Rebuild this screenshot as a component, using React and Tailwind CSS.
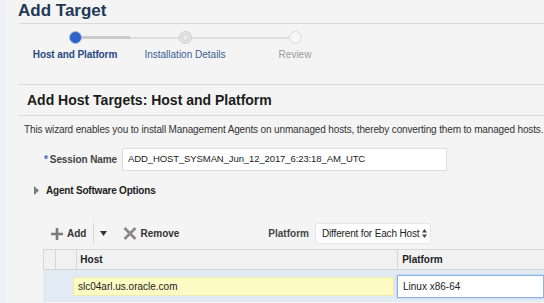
const Step = ({ label, state, left, right }) => {
	return (
		<div className="flex flex-col items-center pt-[7px]">
			<div className="flex items-center w-full h-[13px]">
				<div className="flex-1 flex items-center">
					{left && <div className={left === "thick" ? "w-full h-[3px] bg-[#cbcbcb]" : "w-full h-[2px] bg-[#dedede]"}></div>}
				</div>
				{state === "active" && <div className="w-[13px] h-[13px] rounded-full bg-[#2e63c8] border border-[#a9bde3]"></div>}
				{state === "next" && (
					<div className="w-[13px] h-[13px] rounded-full bg-[#e4e4e4] border border-[#cdcdcd] flex items-center justify-center">
						<div className="w-[7px] h-[7px] rounded-full border border-[#d2d2d2] bg-[#ececec]"></div>
					</div>
				)}
				{state === "todo" && <div className="w-[13px] h-[13px] rounded-full bg-[#f6f6f6] border border-[#dadada]"></div>}
				<div className="flex-1 flex items-center">
					{right && <div className={right === "thick" ? "w-full h-[3px] bg-[#cbcbcb]" : "w-full h-[2px] bg-[#dedede]"}></div>}
				</div>
			</div>
			<div
				className={
					"mt-[5px] leading-[12px] text-[10px] whitespace-nowrap " +
					(state === "active" ? "font-bold text-[#274a85] tracking-[-0.1px]" : state === "next" ? "text-[#3b5d96]" : "text-[#9b9b9b]")
				}
			>
				{label}
			</div>
		</div>
	)
}

const App = () => {
	return (
		<div className="w-[544px] h-[303px] overflow-hidden flex bg-[#f4f4f4] font-['Liberation_Sans',Arial,sans-serif] text-[#333]">
			<div className="w-[5px] shrink-0 bg-[#edf1f7]"></div>
			<div className="flex-1 min-w-0 flex flex-col ml-[14px]">
				<div className="h-[24px] border-b border-[#d9d9d9] shrink-0">
					<h1 className="-ml-[1px] text-[17px] leading-[22px] font-bold text-[#1f3856]">Add Target</h1>
				</div>

				<div className="h-[61px] border-b border-[#d9d9d9] shrink-0">
					<div className="grid grid-cols-[110px_110px_110px] ml-[1px]">
						<Step label="Host and Platform" state="active" right="thick" />
						<Step label="Installation Details" state="next" left="thin" right="thin" />
						<Step label="Review" state="todo" left="thin" />
					</div>
				</div>

				<div className="h-[31px] border-b border-[#d9d9d9] flex items-center pl-[8px] shrink-0">
					<h2 className="text-[14px] font-bold text-[#1c1c1c] whitespace-nowrap">Add Host Targets: Host and Platform</h2>
				</div>

				<div className="h-[26px] flex items-center pl-[5px] shrink-0">
					<p className="text-[10px] tracking-[-0.14px] whitespace-nowrap text-[#333]">
						This wizard enables you to install Management Agents on unmanaged hosts, thereby converting them to managed hosts.
					</p>
				</div>

				<div className="mt-[6px] h-[23px] flex items-center shrink-0">
					<div className="w-[98px] text-right text-[10px] font-bold text-[#444] whitespace-nowrap tracking-[-0.1px]">
						<span className="text-[#3a66b8] mr-[2px]">*</span>Session Name
					</div>
					<div className="ml-[5px] w-[325px] h-[23px] bg-white border border-[#dedede] flex items-center pl-[5px] text-[9.5px] tracking-[-0.1px] text-[#222] whitespace-nowrap">
						ADD_HOST_SYSMAN_Jun_12_2017_6:23:18_AM_UTC
					</div>
				</div>

				<div className="mt-[13px] h-[13px] flex items-center pl-[15px] shrink-0">
					<svg width="5" height="9" viewBox="0 0 5 9">
						<path d="M0 0 L5 4.5 L0 9 Z" fill="#7d7d7d" />
					</svg>
					<span className="ml-[7px] text-[10px] tracking-[-0.2px] font-bold text-[#222]">Agent Software Options</span>
				</div>

				<div className="mt-[26px] h-[21px] flex items-center shrink-0 text-[10px] font-bold text-[#333] whitespace-nowrap">
					<div className="pl-[32px] flex items-center">
						<svg width="12" height="12" viewBox="0 0 12 12">
							<path d="M6 0 V12 M0 6 H12" stroke="#7b7b7b" strokeWidth="2.6" />
						</svg>
						<span className="ml-[4px]">Add</span>
					</div>
					<div className="ml-[7px] w-px h-[21px] bg-[#d8d8d8]"></div>
					<svg className="ml-[6px]" width="7" height="5" viewBox="0 0 7 5">
						<path d="M0 0 H7 L3.5 5 Z" fill="#333" />
					</svg>
					<svg className="ml-[16px]" width="14" height="13" viewBox="0 0 14 13">
						<path d="M1.5 1 L12.5 12 M12.5 1 L1.5 12" stroke="#8a8a8a" strokeWidth="2.8" />
					</svg>
					<span className="ml-[3px]">Remove</span>
					<span className="ml-[89px] text-[#444]">Platform</span>
					<div className="ml-[6px] w-[116px] h-[21px] bg-white rounded-[3px] border border-[#e6e6e6] flex items-center justify-between pl-[6px] pr-[3px] font-normal text-[#222] tracking-[-0.15px]">
						<span>Different for Each Host</span>
						<svg width="5" height="9" viewBox="0 0 5 9">
							<path d="M0 3.5 L2.5 0 L5 3.5 Z M0 5.5 L2.5 9 L5 5.5 Z" fill="#444" />
						</svg>
					</div>
				</div>

				<div className="mt-[5px] ml-[24px] shrink-0 text-[10px]">
					<div className="flex h-[21px] bg-[#f1f1f1] border-t border-b border-[#d6d6d6] font-bold text-[#222]">
						<div className="w-[12px] border-l border-[#d6d6d6]"></div>
						<div className="w-[22px] border-l border-[#d6d6d6]"></div>
						<div className="w-[328px] border-l border-[#d6d6d6] flex items-center pl-[3px]">Host</div>
						<div className="w-[150px] border-l border-[#d6d6d6] flex items-center pl-[4px]">Platform</div>
					</div>
					<div className="flex h-[32px] bg-[#e2eaf4]">
						<div className="w-[12px]"></div>
						<div className="w-[22px]"></div>
						<div className="w-[328px] flex items-center pl-[2px]">
							<div className="w-[321px] h-[19px] bg-[#fbfbc3] border border-[#ecebb4] flex items-center pl-[4px] text-[#222]">
								slc04arl.us.oracle.com
							</div>
						</div>
						<div className="w-[150px] flex items-center pl-[3px]">
							<div className="w-[150px] h-[23px] bg-white border border-[#8fb1e3] shadow-[0_0_2px_#9bbbe8] flex items-center pl-[5px] text-[#222]">
								Linux x86-64
							</div>
						</div>
					</div>
				</div>
			</div>
		</div>
	)
}

export default App;
